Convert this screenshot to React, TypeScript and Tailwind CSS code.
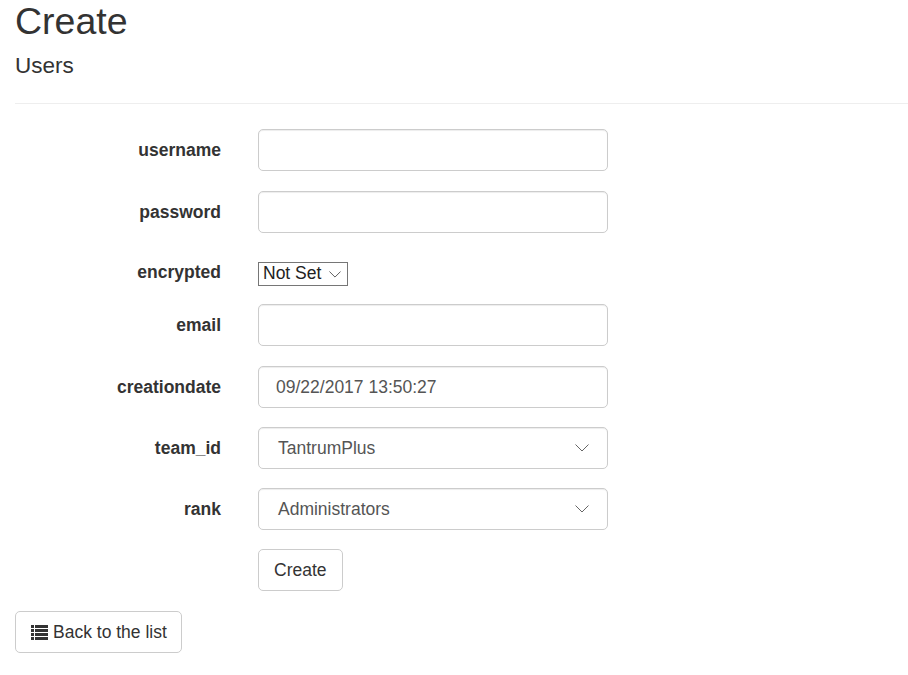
import React from "react";

const Chevron = ({ w = 14, h = 8, c = "#666" }: { w?: number; h?: number; c?: string }) => (
  <svg width={w} height={h} viewBox="0 0 14 8" fill="none">
    <path d="M0.5 0.5 L7 7 L13.5 0.5" stroke={c} strokeWidth="1" />
  </svg>
);

const ListIcon = () => (
  <svg width="17" height="15" viewBox="0 0 17 15" fill="#333">
    <rect x="0" y="0" width="3" height="3" />
    <rect x="4" y="0" width="13" height="3" />
    <rect x="0" y="4" width="3" height="3" />
    <rect x="4" y="4" width="13" height="3" />
    <rect x="0" y="8" width="3" height="3" />
    <rect x="4" y="8" width="13" height="3" />
    <rect x="0" y="12" width="3" height="3" />
    <rect x="4" y="12" width="13" height="3" />
  </svg>
);

const inputCls =
  "w-[350px] h-[42px] rounded-[5px] border border-[#ccc] bg-white shadow-[inset_0_1px_1px_rgba(0,0,0,0.075)] flex items-center px-[17px] text-[17.5px] text-[#555]";

function Row({ label, children, h = 42 }: { label: string; children?: React.ReactNode; h?: number }) {
  return (
    <div className="flex items-start mb-[20px]" style={{ height: h }}>
      <div className="w-[221px] h-[42px] flex items-center justify-end font-bold text-[17.5px] text-[#333]">
        {label}
      </div>
      <div className="ml-[37px]">{children}</div>
    </div>
  );
}

export default function App() {
  return (
    <div
      className="w-[908px] h-[675px] bg-white text-[#333] overflow-hidden"
      style={{ fontFamily: '"Liberation Sans", Arial, sans-serif' }}
    >
      <div className="pl-[15px]">
        <div className="text-[37.5px] leading-[42px]">Create</div>
        <div className="text-[22.5px] leading-[26px] mt-[11px]">Users</div>
        <div className="mt-[24px] border-t border-[#eee]" />
      </div>

      <div className="pt-[25px]">
        <Row label="username">
          <div className={inputCls}></div>
        </Row>
        <Row label="password">
          <div className={inputCls}></div>
        </Row>
        <div className="flex items-start mb-[20px] h-[31px]">
          <div className="w-[221px] h-[38px] flex items-center justify-end font-bold text-[17.5px] text-[#333]">
            encrypted
          </div>
          <div className="ml-[37px] mt-[9px] h-[24px] w-[90px] border border-[#767676] bg-white flex items-center pl-[4px] pr-[6px] justify-between text-[17.5px] text-[#222]">
            <span className="leading-none">Not Set</span>
            <Chevron w={12} h={7} c="#444" />
          </div>
        </div>
        <Row label="email">
          <div className={inputCls}></div>
        </Row>
        <Row label="creationdate">
          <div className={inputCls}>09/22/2017 13:50:27</div>
        </Row>
        <div className="-mt-[1px]">
          <Row label="team_id">
            <div className={inputCls + " justify-between pl-[19px] pr-[18px]"}>
              <span>TantrumPlus</span>
              <Chevron />
            </div>
          </Row>
        </div>
        <div className="-mt-[1px]">
          <Row label="rank">
            <div className={inputCls + " justify-between pl-[19px] pr-[18px]"}>
              <span>Administrators</span>
              <Chevron />
            </div>
          </Row>
        </div>
        <div className="-mt-[1px] ml-[258px] mb-[20px]">
          <button className="h-[42px] px-[15px] rounded-[5px] border border-[#ccc] bg-white text-[17.5px] text-[#333]">
            Create
          </button>
        </div>
        <div className="ml-[15px]">
          <button className="h-[42px] pl-[15px] pr-[14px] rounded-[5px] border border-[#ccc] bg-white text-[17.5px] text-[#333] flex items-center gap-[5px]">
            <ListIcon />
            <span>Back to the list</span>
          </button>
        </div>
      </div>
    </div>
  );
}
